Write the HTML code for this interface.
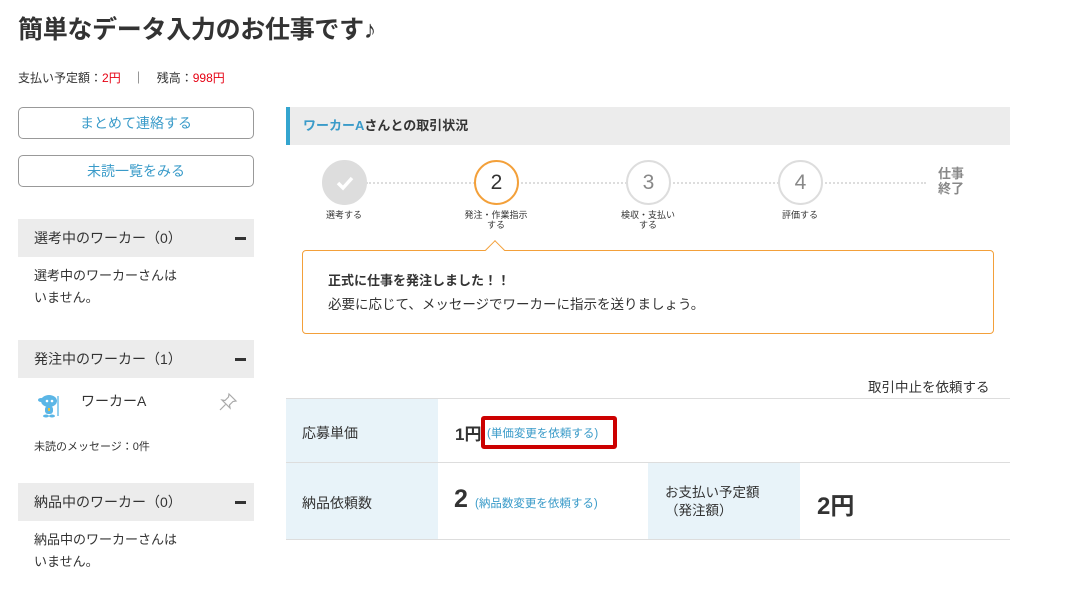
<!DOCTYPE html>
<html><head><meta charset="utf-8"><style>
*{margin:0;padding:0;box-sizing:border-box}
body{width:1065px;height:596px;background:#fff;font-family:"Liberation Sans","Noto Sans CJK JP",sans-serif;color:#333;position:relative;overflow:hidden}
.a{position:absolute;white-space:nowrap}
.btn{position:absolute;left:18px;width:236px;height:32px;border:1px solid #999;border-radius:5px;color:#3a9bc9;font-size:14px;text-align:center;line-height:30px}
.sh{position:absolute;left:18px;width:236px;height:38px;background:#ececec;font-size:14px;line-height:38px;padding-left:16px}
.sh:after{content:"";position:absolute;right:8px;top:18px;width:11px;height:3px;background:#333}
.t{font-size:13px;line-height:22px}
.c{position:absolute;width:45px;height:45px;border-radius:50%;border:2px solid #ddd;text-align:center;line-height:41px;font-size:21px;color:#888;top:160px;background:#fff}
.lb{position:absolute;font-size:9px;text-align:center;width:100px;line-height:10px;top:210px}
.red{color:#e60012}
.lk{color:#3a9bc9;font-size:11.5px}
</style></head><body>
<div class="a" style="left:18px;top:10px;font-size:25px;font-weight:bold;color:#333;letter-spacing:-0.3px">簡単なデータ入力のお仕事です♪</div>
<div class="a" style="left:18px;top:69px;font-size:12px">支払い予定額：<span class="red">2円</span>　｜　残高：<span class="red">998円</span></div>
<div class="btn" style="top:107px">まとめて連絡する</div>
<div class="btn" style="top:155px">未読一覧をみる</div>
<div class="sh" style="top:219px">選考中のワーカー（0）</div>
<div class="a t" style="left:34px;top:265px">選考中のワーカーさんは<br>いません。</div>
<div class="sh" style="top:340px">発注中のワーカー（1）</div>
<div class="a" style="left:36px;top:392px;width:28px;height:28px">
<svg width="28" height="28" viewBox="0 0 28 28"><ellipse cx="13" cy="9" rx="8" ry="6" fill="#5bb6e6"/><ellipse cx="5" cy="8" rx="3" ry="2" fill="#5bb6e6"/><circle cx="11" cy="9" r="1.3" fill="#fff"/><circle cx="16" cy="9" r="1.3" fill="#fff"/><rect x="9" y="14" width="8" height="8" rx="3" fill="#5bb6e6"/><rect x="12" y="16" width="2" height="3" fill="#e8c040"/><line x1="22" y1="4" x2="22" y2="24" stroke="#5bb6e6" stroke-width="1.3"/><ellipse cx="10" cy="24" rx="3" ry="1.5" fill="#5bb6e6"/><ellipse cx="16" cy="24" rx="3" ry="1.5" fill="#5bb6e6"/></svg></div>
<div class="a" style="left:81px;top:391px;font-size:14px">ワーカーA</div>
<svg class="a" style="left:218px;top:392px" width="20" height="20" viewBox="0 0 20 20"><path d="M11 2 L18 9 L15 9.5 L11.5 13 L12 16 L4 8 L7 8.5 L10.5 5 Z M7.5 12.5 L2 18" fill="none" stroke="#aaa" stroke-width="1.2"/></svg>
<div class="a" style="left:34px;top:438px;font-size:11px">未読のメッセージ：0件</div>
<div class="sh" style="top:483px">納品中のワーカー（0）</div>
<div class="a t" style="left:34px;top:529px">納品中のワーカーさんは<br>いません。</div>

<div class="a" style="left:286px;top:107px;width:724px;height:38px;background:#ececec;border-left:4px solid #34a5cf;font-size:13px;font-weight:bold;line-height:38px;padding-left:13px"><span style="color:#3a9bc9">ワーカーA</span>さんとの取引状況</div>
<div class="a" style="left:366px;top:182px;width:560px;border-top:2px dotted #ddd"></div>
<div class="c" style="left:322px;background:#ddd;border-color:#ddd"><svg width="22" height="22" viewBox="0 0 22 22" style="margin-top:10px"><path d="M4 11 L9 16 L18 6" fill="none" stroke="#fff" stroke-width="3.5"/></svg></div>
<div class="c" style="left:474px;border-color:#f3a03a;color:#333">2</div>
<div class="c" style="left:626px">3</div>
<div class="c" style="left:778px">4</div>
<div class="a" style="left:938px;top:166px;font-size:13px;font-weight:bold;color:#888;line-height:15px">仕事<br>終了</div>
<div class="lb" style="left:294px">選考する</div>
<div class="lb" style="left:446px">発注・作業指示<br>する</div>
<div class="lb" style="left:598px">検収・支払い<br>する</div>
<div class="lb" style="left:750px">評価する</div>
<div class="a" style="left:302px;top:250px;width:692px;height:84px;border:1px solid #f3a03a;border-radius:4px"></div>
<div class="a" style="left:488px;top:243px;width:14px;height:14px;background:#fff;border-left:1px solid #f3a03a;border-top:1px solid #f3a03a;transform:rotate(45deg)"></div>
<div class="a" style="left:328px;top:270px;font-size:13px;font-weight:bold">正式に仕事を発注しました！！</div>
<div class="a" style="left:328px;top:293px;font-size:13.5px">必要に応じて、メッセージでワーカーに指示を送りましょう。</div>
<div class="a" style="left:868px;top:376px;font-size:13.5px">取引中止を依頼する</div>

<div class="a" style="left:286px;top:398px;width:724px;height:142px;border-top:1px solid #ddd;border-bottom:1px solid #ddd"></div>
<div class="a" style="left:286px;top:399px;width:152px;height:140px;background:#e8f3f9"></div>
<div class="a" style="left:648px;top:463px;width:152px;height:76px;background:#e8f3f9"></div>
<div class="a" style="left:286px;top:462px;width:724px;border-top:1px solid #ddd"></div>
<div class="a" style="left:302px;top:423px;font-size:14px">応募単価</div>
<div class="a" style="left:455px;top:420px;font-size:17px;font-weight:bold">1円</div>
<div class="a" style="left:481px;top:416px;width:136px;height:33px;border:4px solid #c00;border-radius:3px"></div>
<div class="a lk" style="left:487px;top:425px">(単価変更を依頼する)</div>
<div class="a" style="left:302px;top:493px;font-size:14px">納品依頼数</div>
<div class="a" style="left:454px;top:485px;font-size:25px;font-weight:bold">2</div>
<div class="a lk" style="left:475px;top:495px">(納品数変更を依頼する)</div>
<div class="a" style="left:665px;top:484px;font-size:13.5px;line-height:18px">お支払い予定額<br>（発注額）</div>
<div class="a" style="left:817px;top:486px;font-size:24px;font-weight:bold">2円</div>
</body></html>
